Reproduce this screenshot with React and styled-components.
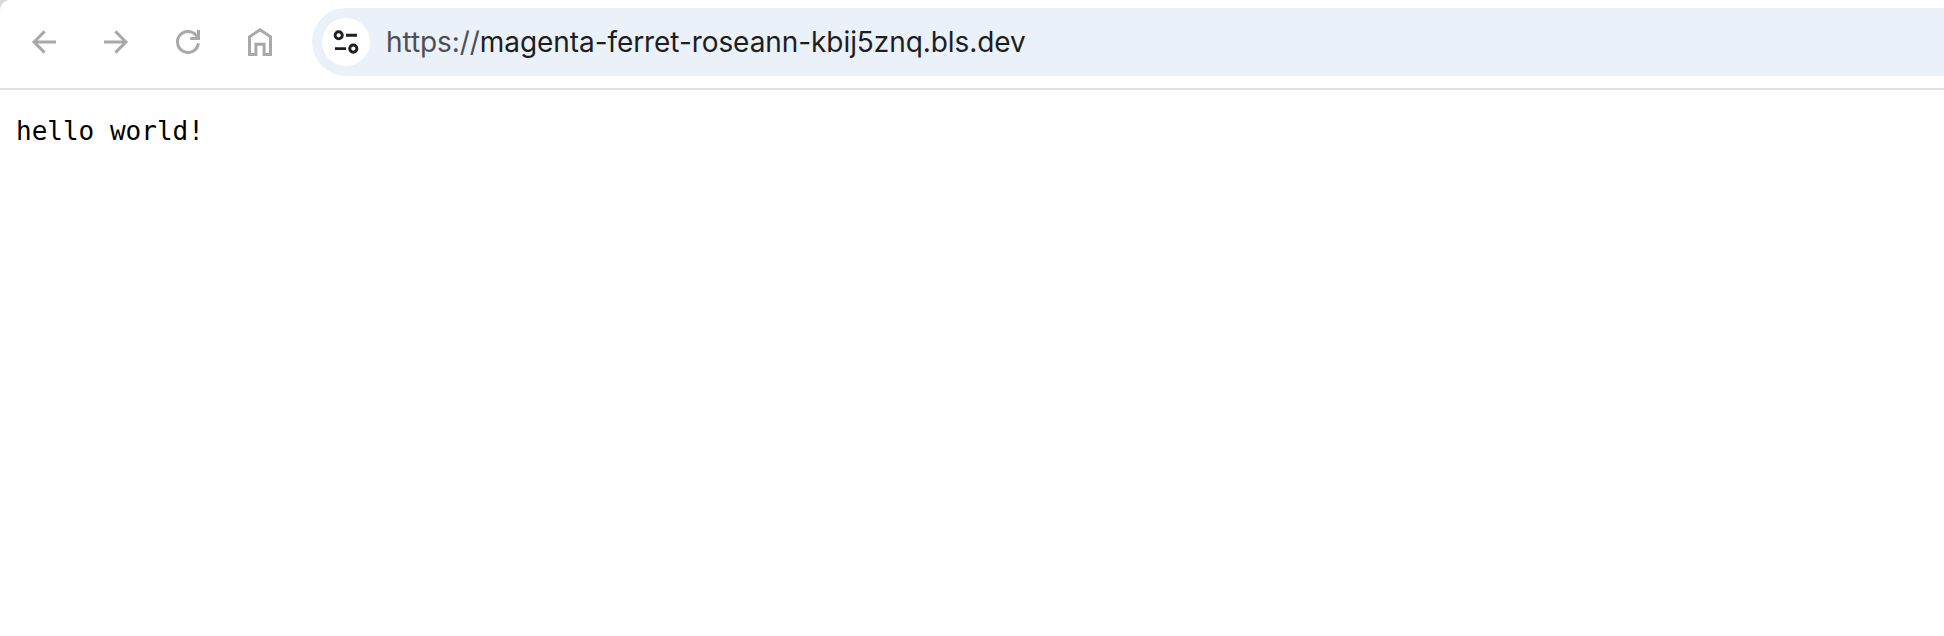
import React from "react";
import styled, { createGlobalStyle } from "styled-components";

const GlobalStyle = createGlobalStyle`
  body {
    margin: 0;
    background: #fff;
  }
`;

const Window = styled.div`
  min-height: 636px;
  background: #d9d9d9;
`;

const Toolbar = styled.header`
  box-sizing: border-box;
  display: flex;
  align-items: flex-start;
  height: 90px;
  padding: 8px 0 0 26px;
  background: #fff;
  border-bottom: 2px solid #e1e1e1;
  border-top-left-radius: 10px;
`;

const NavButtons = styled.nav`
  display: flex;
  align-items: center;
  gap: 36px;
  height: 68px;
  margin-right: 34px;
`;

const NavButton = styled.button`
  width: 36px;
  height: 36px;
  padding: 0;
  border: 0;
  background: none;
`;

const Icon = styled.svg`
  display: block;
  fill: none;
  stroke: ${(p) => p.$color || "#a9a9a9"};
  stroke-width: ${(p) => p.$weight || 3};
`;

const AddressBar = styled.div`
  box-sizing: border-box;
  flex: 1;
  display: flex;
  align-items: center;
  height: 68px;
  padding-left: 10px;
  background: #ebf1f9;
  border-radius: 34px 0 0 34px;
`;

const SiteInfo = styled.span`
  display: flex;
  align-items: center;
  justify-content: center;
  width: 48px;
  height: 48px;
  border-radius: 50%;
  background: #fff;
`;

const Url = styled.span`
  margin-left: 16px;
  font: 400 28px/34px Inter, "Liberation Sans", sans-serif;
  letter-spacing: -0.07px;
  white-space: nowrap;
  color: #1c1e22;
`;

const Scheme = styled.span`
  color: #4c4f54;
`;

const Page = styled.main`
  min-height: 546px;
  background: #fff;
`;

const Body = styled.pre`
  margin: 0;
  padding: 26px 16px 0;
  font: 26px/30px "DejaVu Sans Mono", monospace;
  color: #000;
`;

const icons = [
  { label: "Back", d: "M30 18H8.2M18.6 7.4L8.1 18L18.6 28.6" },
  { label: "Forward", d: "M6 18H27.8M17.4 7.4L27.9 18L17.4 28.6" },
  {
    label: "Reload",
    d: "M28.4 19.2A10.5 10.5 0 1 1 26.2 11.4L28.2 14M28.5 6V14.5H20.2",
  },
  {
    label: "Home",
    d: "M7.5 30.5V12.8L18 5.8L28.5 12.8V30.5H22.1V20.2H13.9V30.5Z",
  },
];

export default function App() {
  return (
    <Window>
      <GlobalStyle />
      <Toolbar>
        <NavButtons>
          {icons.map(({ label, d }) => (
            <NavButton key={label} aria-label={label}>
              <Icon width="36" height="36" viewBox="0 0 36 36">
                <path d={d} />
              </Icon>
            </NavButton>
          ))}
        </NavButtons>
        <AddressBar>
          <SiteInfo>
            <Icon width="48" height="48" viewBox="0 0 48 48" $color="#1f1f1f" $weight={2.9}>
              <circle cx="16.7" cy="17.3" r="3.6" />
              <path d="M24 17.3H35M13 30.6H24" />
              <circle cx="31.3" cy="30.6" r="3.6" />
            </Icon>
          </SiteInfo>
          <Url>
            <Scheme>https://</Scheme>magenta-ferret-roseann-kbij5znq.bls.dev
          </Url>
        </AddressBar>
      </Toolbar>
      <Page>
        <Body>hello world!</Body>
      </Page>
    </Window>
  );
}
